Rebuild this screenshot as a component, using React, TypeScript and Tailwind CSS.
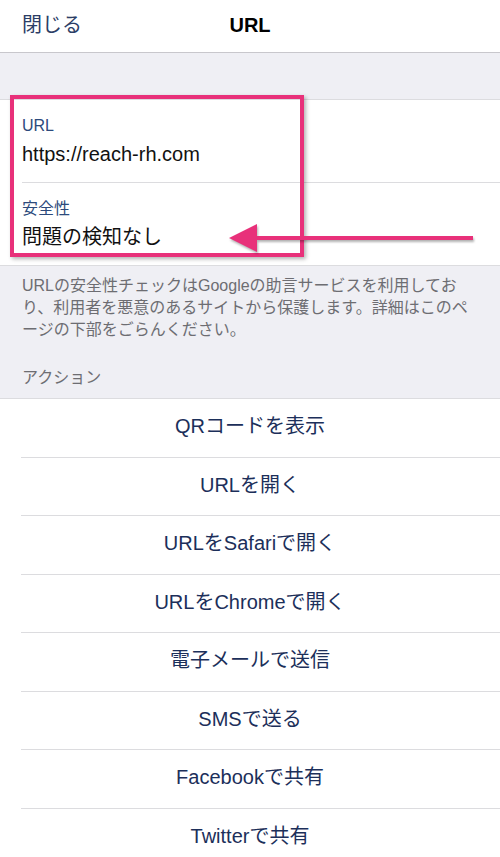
import React from "react";

const actions = [
  "QRコードを表示",
  "URLを開く",
  "URLをSafariで開く",
  "URLをChromeで開く",
  "電子メールで送信",
  "SMSで送る",
  "Facebookで共有",
  "Twitterで共有",
];

const font = {
  fontFamily: '"Liberation Sans", "Noto Sans CJK JP", sans-serif',
};

export default function App() {
  return (
    <div
      className="w-[500px] h-[857px] overflow-hidden bg-[#efeff4]"
      style={font}
    >
      {/* Nav bar */}
      <div className="h-[53px] bg-white border-b border-[#c8c7cc] grid grid-cols-3 items-center">
        <button className="justify-self-start pl-[22px] pb-[3px] text-[20px] text-[#2c3e66]">
          閉じる
        </button>
        <h1 className="justify-self-center pb-[3px] text-[20px] font-bold text-black">
          URL
        </h1>
        <div />
      </div>

      <div className="h-[46px]" />

      {/* URL info */}
      <div className="relative bg-white border-t border-b border-[#dcdcdf]">
        <div className="h-[82px] pl-[22px] flex flex-col justify-center">
          <span className="text-[16px] leading-[20px] text-[#2c4a7c] mt-[2px]">
            URL
          </span>
          <span className="text-[20px] leading-[28px] text-[#111] mt-[4px]">
            https://reach-rh.com
          </span>
        </div>
        <div className="ml-[22px] border-t border-[#dcdcdf]" />
        <div className="h-[82px] pl-[22px] flex flex-col justify-center">
          <span className="text-[16px] leading-[20px] text-[#2c4a7c] mt-[2px]">
            安全性
          </span>
          <span className="text-[20px] leading-[28px] text-[#111] mt-[4px]">
            問題の検知なし
          </span>
        </div>

        {/* highlight box */}
        <div className="absolute left-[10px] top-[-5px] w-[294px] h-[162px] border-4 border-[#e8317a] shadow-[2px_2px_4px_rgba(0,0,0,0.3)]" />

        {/* arrow */}
        <svg
          className="absolute left-[220px] top-[116px] drop-shadow-[1px_2px_1px_rgba(0,0,0,0.3)]"
          width="260"
          height="40"
          viewBox="0 0 260 40"
        >
          <rect x="34" y="20" width="219" height="4" fill="#e8317a" />
          <polygon points="9,22 37,8 37,36" fill="#e8317a" />
        </svg>
      </div>

      {/* footer note */}
      <p className="pt-[9px] px-[22px] text-[16px] leading-[22px] text-[#6d6d72]">
        URLの安全性チェックはGoogleの助言サービスを利用しており、利用者を悪意のあるサイトから保護します。詳細はこのページの下部をごらんください。
      </p>

      <div className="mt-[26px] pb-[9px] px-[22px] text-[16px] leading-[22px] text-[#6d6d72]">
        アクション
      </div>

      {/* Actions */}
      <div className="bg-white border-t border-[#dcdcdf]">
        {actions.map((label, i) => (
          <div key={label}>
            {i > 0 && <div className="ml-[21px] border-t border-[#dcdcdf]" />}
            <button className="w-full h-[57.5px] pb-[3px] flex items-center justify-center text-[20px] text-[#1c2f5a]">
              {label}
            </button>
          </div>
        ))}
      </div>
    </div>
  );
}
